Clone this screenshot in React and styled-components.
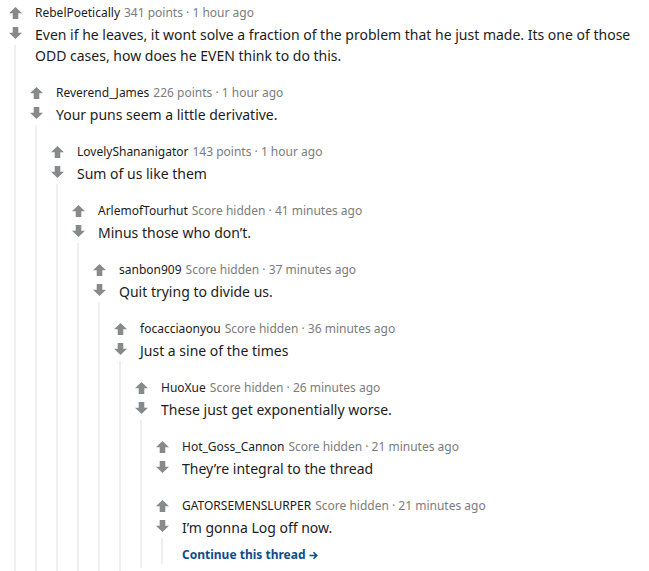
import React from 'react'
import styled, { createGlobalStyle } from 'styled-components'

const GlobalStyle = createGlobalStyle`
  body {
    margin: 0;
    background: #fff;
    font-family: "Noto Sans", "Open Sans", sans-serif;
  }
`

const Page = styled.div`
  overflow: hidden;
  height: 571px;
`

const CommentBox = styled.div`
  display: grid;
  grid-template-columns: 21px 14px 1fr;
  grid-template-areas:
    "vote . main"
    "vote kids kids";
  padding: 5px 0 4px;
  & + & {
    margin-top: 10px;
  }
`

const VoteCol = styled.div`
  grid-area: vote;
  display: flex;
  flex-direction: column;
  align-items: center;
  width: 30px;
`

const VoteBtn = styled.div`
  height: ${p => p.h}px;
  display: flex;
  align-items: center;
  justify-content: center;
  color: #878a8c;
`

const Rail = styled.div`
  flex: 1;
  width: 2px;
  background: #edeff1;
`

const Main = styled.div`
  grid-area: main;
  min-width: 0;
`

const Header = styled.div`
  font-size: 12px;
  line-height: 16px;
  color: #7c7c7c;
  margin-bottom: 3px;
  white-space: nowrap;
`

const Author = styled.span`
  color: #1c1c1c;
  margin-right: 4px;
`

const Body = styled.p`
  margin: 0;
  font-size: 14px;
  line-height: 21px;
  color: #1c1c1c;
`

const Kids = styled.div`
  grid-area: kids;
  margin-top: 14px;
`

const ContinueLink = styled.a`
  display: inline-flex;
  align-items: center;
  gap: 3px;
  margin-top: 9px;
  font-size: 12px;
  line-height: 16px;
  font-weight: 700;
  color: #0f4c8f;
  text-decoration: none;
`

const Arrow = ({ down }) => (
  <svg width="13" height="12" viewBox="0 0 13 12" style={down ? { transform: 'rotate(180deg)' } : null}>
    <path d="M6.5 0 L13 6.2 L9.3 6.2 L9.3 12 L3.7 12 L3.7 6.2 L0 6.2 Z" fill="currentColor" />
  </svg>
)

const LinkArrow = () => (
  <svg width="9" height="9" viewBox="0 0 9 9">
    <path d="M0.5 4.5 H7.5 M4.5 1.2 L7.8 4.5 L4.5 7.8" fill="none" stroke="currentColor" strokeWidth="1.6" />
  </svg>
)

const thread = {
  author: 'RebelPoetically', score: '341 points', time: '1 hour ago',
  body: 'Even if he leaves, it wont solve a fraction of the problem that he just made. Its one of those ODD cases, how does he EVEN think to do this.',
  kids: [{
    author: 'Reverend_James', score: '226 points', time: '1 hour ago',
    body: 'Your puns seem a little derivative.',
    kids: [{
      author: 'LovelyShananigator', score: '143 points', time: '1 hour ago',
      body: 'Sum of us like them',
      kids: [{
        author: 'ArlemofTourhut', score: 'Score hidden', time: '41 minutes ago',
        body: 'Minus those who don\u2019t.',
        kids: [{
          author: 'sanbon909', score: 'Score hidden', time: '37 minutes ago',
          body: 'Quit trying to divide us.',
          kids: [{
            author: 'focacciaonyou', score: 'Score hidden', time: '36 minutes ago',
            body: 'Just a sine of the times',
            kids: [{
              author: 'HuoXue', score: 'Score hidden', time: '26 minutes ago',
              body: 'These just get exponentially worse.',
              kids: [
                {
                  author: 'Hot_Goss_Cannon', score: 'Score hidden', time: '21 minutes ago',
                  body: 'They\u2019re integral to the thread',
                },
                {
                  author: 'GATORSEMENSLURPER', score: 'Score hidden', time: '21 minutes ago',
                  body: 'I\u2019m gonna Log off now.',
                  more: true,
                },
              ],
            }],
          }],
        }],
      }],
    }],
  }],
}

function Comment({ c }) {
  return (
    <CommentBox>
      <VoteCol>
        <VoteBtn h={16}><Arrow /></VoteBtn>
        <VoteBtn h={24}><Arrow down /></VoteBtn>
        <Rail />
      </VoteCol>
      <Main>
        <Header>
          <Author>{c.author}</Author>
          {c.score} · {c.time}
        </Header>
        <Body>{c.body}</Body>
        {c.more && <ContinueLink href="#">Continue this thread <LinkArrow /></ContinueLink>}
      </Main>
      {c.kids && (
        <Kids>
          {c.kids.map(k => <Comment key={k.author} c={k} />)}
        </Kids>
      )}
    </CommentBox>
  )
}

export default function App() {
  return (
    <Page>
      <GlobalStyle />
      <Comment c={thread} />
    </Page>
  )
}
